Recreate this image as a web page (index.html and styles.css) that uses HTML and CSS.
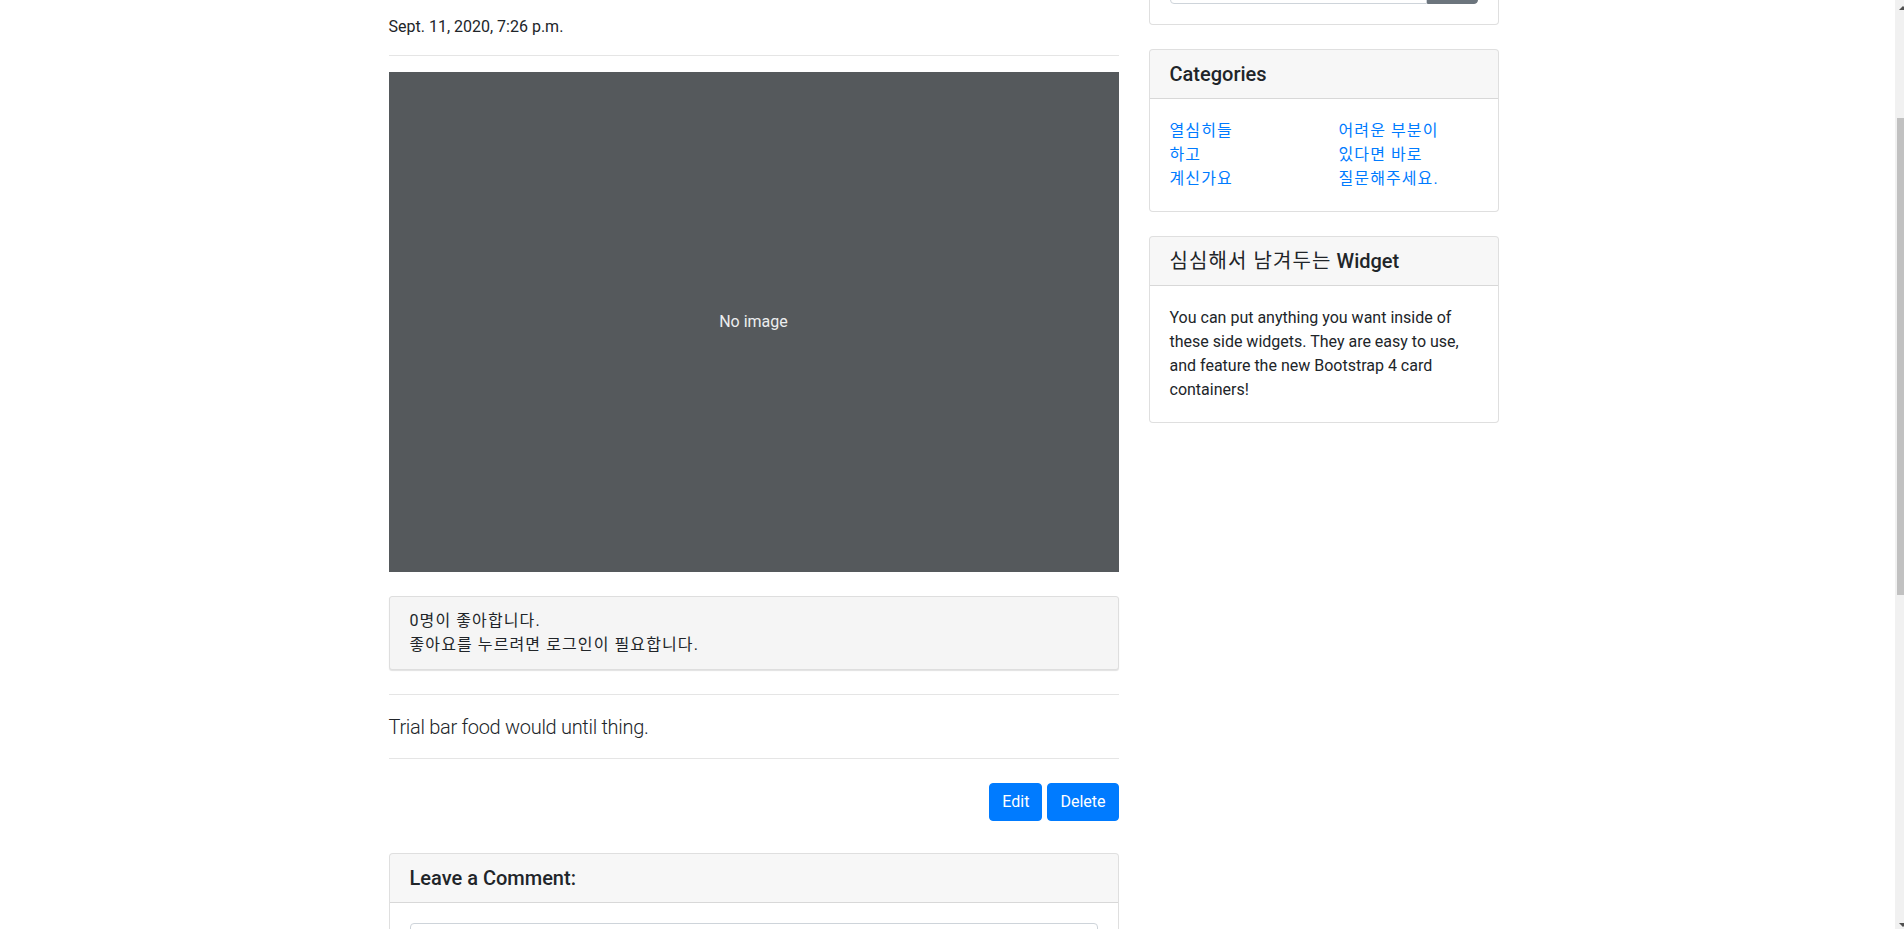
FILE: index.html
```html
<!DOCTYPE html>
<html lang="ko">
<head>
<meta charset="utf-8">
<title>Post</title>
<link rel="stylesheet" href="styles.css">
</head>
<body>
<div class="page">
  <div class="container">
    <div class="row">
      <main class="col-main">
        <p class="post-date">Sept. 11, 2020, 7:26 p.m.</p>
        <hr>
        <div class="img-placeholder"><span>No image</span></div>
        <div class="like-box ko">
          <p>0명이 좋아합니다.</p>
          <p>좋아요를 누르려면 로그인이 필요합니다.</p>
        </div>
        <hr>
        <p class="lead">Trial bar food would until thing.</p>
        <hr>
        <div class="post-actions">
          <a class="btn btn-primary" href="#">Edit</a>
          <a class="btn btn-primary" href="#">Delete</a>
        </div>
        <div class="card">
          <h5 class="card-header">Leave a Comment:</h5>
          <div class="card-body">
            <textarea class="form-control" rows="3"></textarea>
          </div>
        </div>
      </main>
      <aside class="col-side">
        <div class="card search-card">
          <h5 class="card-header">Search</h5>
          <div class="card-body">
            <div class="input-group">
              <input class="form-control" type="text" placeholder="Search for...">
              <button class="btn btn-secondary" type="button">Go!</button>
            </div>
          </div>
        </div>
        <div class="card">
          <h5 class="card-header">Categories</h5>
          <div class="card-body">
            <div class="cat-grid ko">
              <ul class="list-unstyled">
                <li><a href="#">열심히들</a></li>
                <li><a href="#">하고</a></li>
                <li><a href="#">계신가요</a></li>
              </ul>
              <ul class="list-unstyled">
                <li><a href="#">어려운 부분이</a></li>
                <li><a href="#">있다면 바로</a></li>
                <li><a href="#">질문해주세요.</a></li>
              </ul>
            </div>
          </div>
        </div>
        <div class="card">
          <h5 class="card-header"><span class="ko ko-light">심심해서 남겨두는</span> Widget</h5>
          <div class="card-body">
            You can put anything you want inside of these side widgets. They are easy to use, and feature the new Bootstrap 4 card containers!
          </div>
        </div>
      </aside>
    </div>
  </div>
</div>
<div class="scrollbar">
  <div class="sb-arrow sb-up"></div>
  <div class="sb-thumb"></div>
  <div class="sb-arrow sb-down"></div>
</div>
</body>
</html>
```

FILE: styles.css
```css
* { box-sizing: border-box; }
html, body { margin: 0; overflow: hidden; height: 100%; }
body {
  font-family: Roboto, "Noto Sans CJK KR", sans-serif;
  font-size: 16px;
  line-height: 1.5;
  color: #212529;
  background: #fff;
}
.ko { letter-spacing: 1.1px; }
.page { margin-right: 17px; }
.container { max-width: 1140px; margin: 0 auto; padding: 0 15px; }
.row { display: flex; margin: 0 -15px; align-items: flex-start; }
.col-main { flex: 0 0 760px; padding: 15px 15px 0; }
.col-side { flex: 0 0 380px; padding: 0 15px; }

p { margin: 0 0 16px; }
hr { border: 0; border-top: 1px solid rgba(0,0,0,.1); margin: 16px 0; }
a { color: #007bff; text-decoration: none; }

.post-date { margin-bottom: 16px; }
.img-placeholder {
  height: 500px;
  background: #55595c;
  color: #eceeef;
  display: flex; align-items: center; justify-content: center;
}
.like-box {
  margin-top: 24px; margin-bottom: 24px;
  padding: 12px 20px;
  background: #f5f5f5;
  border: 1px solid #dedede;
  border-radius: 3px;
  box-shadow: 0 1px 1px rgba(0,0,0,.12);
}
.like-box p { margin: 0; }
.lead { font-size: 20px; font-weight: 300; letter-spacing: -0.3px; padding-top: 1px; margin-bottom: 16px; }

.post-actions { display: flex; justify-content: flex-end; gap: 5px; margin: 24px 0 32px; }
.btn {
  display: inline-block; font-size: 16px; line-height: 24px;
  padding: 6px 12px; border: 1px solid transparent; border-radius: 4px;
  font-family: inherit; cursor: pointer;
}
.btn-primary { background: #007bff; border-color: #007bff; color: #fff; }
.btn-secondary { background: #6c757d; border-color: #6c757d; color: #fff; border-radius: 0 4px 4px 0; }

.card {
  border: 1px solid rgba(0,0,0,.125);
  border-radius: 4px;
  margin: 24px 0;
  background: #fff;
}
.card-header {
  margin: 0;
  padding: 12px 20px;
  font-size: 20px; font-weight: 500; line-height: 1.2;
  background: rgba(0,0,0,.03);
  border-bottom: 1px solid rgba(0,0,0,.125);
  border-radius: 3px 3px 0 0;
}
.ko-light { font-weight: 400; }
.card-body { padding: 20px; }
.search-card { margin-top: -104px; }
.input-group { display: flex; }
.form-control {
  display: block; width: 100%; height: 38px;
  padding: 6px 12px; font-size: 16px; line-height: 1.5; font-family: inherit;
  color: #495057; border: 1px solid #ced4da; border-radius: 4px; background: #fff;
}
.input-group .form-control { border-radius: 4px 0 0 4px; flex: 1; }
textarea.form-control { height: 86px; resize: vertical; }

.cat-grid { display: grid; grid-template-columns: 1fr 1fr; column-gap: 30px; }
.list-unstyled { list-style: none; margin: 0; padding: 0; }

.scrollbar {
  position: fixed; top: 0; bottom: 0; right: -8px; width: 17px;
  background: #f1f1f1;
}
.sb-thumb { position: absolute; left: 2px; right: 2px; top: 118px; height: 477px; background: #c1c1c1; }
.sb-arrow { position: absolute; left: 4px; width: 0; height: 0; border-left: 4px solid transparent; border-right: 4px solid transparent; }
.sb-up { top: 6px; border-bottom: 4px solid #505050; }
.sb-down { bottom: 2px; border-top: 4px solid #505050; }
```
